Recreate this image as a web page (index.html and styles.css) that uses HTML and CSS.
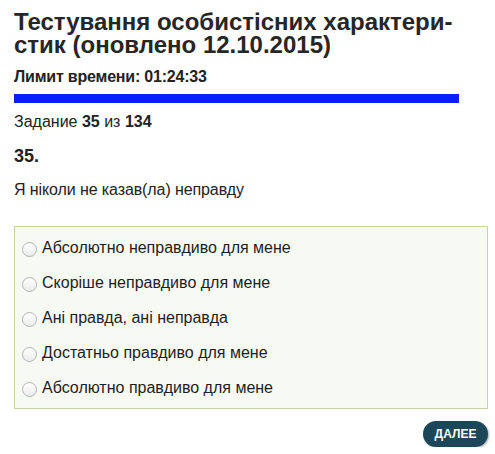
FILE: index.html
```html
<!DOCTYPE html>
<html lang="uk">
<head>
<meta charset="utf-8">
<link rel="stylesheet" href="styles.css">
</head>
<body>
<div class="page">
  <h1 class="title">Тестування особистісних характери-<br>стик (оновлено 12.10.2015)</h1>
  <div class="timer">Лимит времени: 01:24:33</div>
  <div class="bar"></div>
  <div class="counter">Задание <b>35</b> из <b>134</b></div>
  <div class="qnum">35.</div>
  <div class="question">Я ніколи не казав(ла) неправду</div>
  <div class="answers">
    <label class="opt"><span class="radio"></span>Абсолютно неправдиво для мене</label>
    <label class="opt"><span class="radio"></span>Скоріше неправдиво для мене</label>
    <label class="opt"><span class="radio"></span>Ані правда, ані неправда</label>
    <label class="opt"><span class="radio"></span>Достатньо правдиво для мене</label>
    <label class="opt"><span class="radio"></span>Абсолютно правдиво для мене</label>
  </div>
  <div class="actions"><button class="next">ДАЛЕЕ</button></div>
</div>
</body>
</html>
```
FILE: styles.css
```css
html, body { margin: 0; padding: 0; background: #fff; }
body { font-family: "Liberation Sans", Arial, sans-serif; color: #222; }
.page { padding: 10px 7px 0 14px; display: flex; flex-direction: column; }
.title { margin: 0; font-size: 24px; line-height: 23px; font-weight: bold; color: #262626; }
.timer { margin-top: 12px; font-size: 16px; font-weight: bold; line-height: 18px; letter-spacing: -0.2px; }
.bar { margin-top: 8px; width: 445px; height: 9px; background: #0b1ffb; }
.counter { margin-top: 10px; font-size: 16px; line-height: 18px; }
.counter b { font-weight: bold; }
.qnum { margin-top: 15px; font-size: 18px; font-weight: bold; line-height: 20px; }
.question { margin-top: 15px; font-size: 16px; line-height: 18px; letter-spacing: -0.1px; }
.answers { margin-top: 27px; border: 1px solid #c4d4a4; background: #f7f9f3; padding: 3px 8px 3px 7px; display: flex; flex-direction: column; }
.opt { display: flex; align-items: center; height: 35px; font-size: 16px; color: #1e1e1e; }
.radio { width: 13px; height: 13px; border-radius: 50%; border: 1px solid #b5b5b5; background: linear-gradient(#fff, #ececec); margin: 4px 5px 0 0; flex: none; box-sizing: content-box; }
.actions { display: flex; justify-content: flex-end; margin-top: 12px; }
.next { font-family: "Liberation Sans", Arial, sans-serif; font-size: 12px; font-weight: bold; color: #fff; background: #1b4759; border: none; border-radius: 13px; height: 26px; width: 65px; padding: 0; box-shadow: 1px 1px 2px rgba(0,0,0,0.35); }
```
